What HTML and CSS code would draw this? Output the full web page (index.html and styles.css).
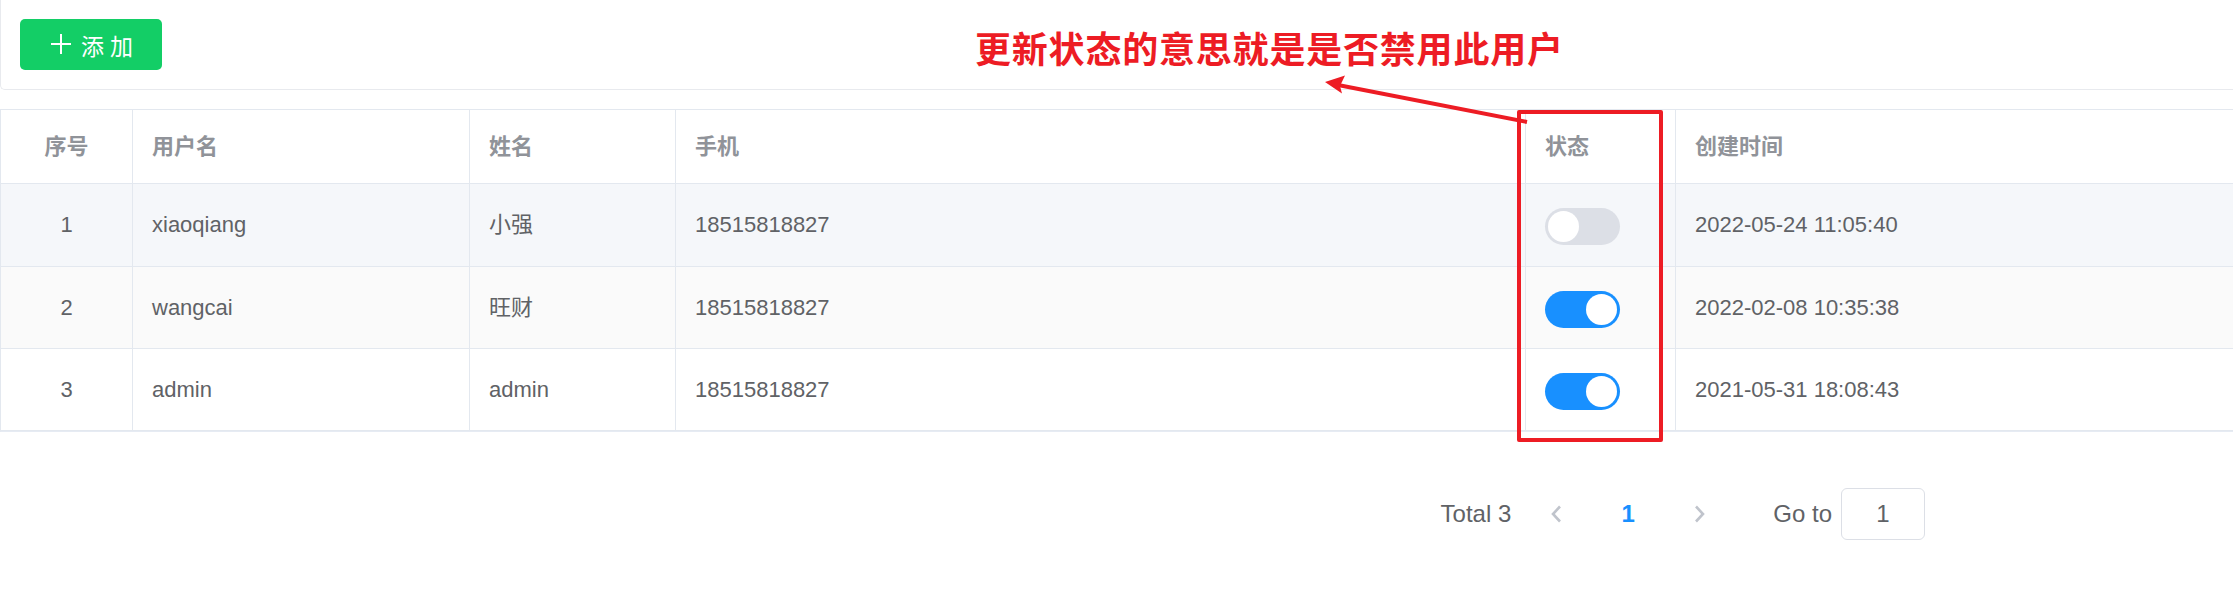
FILE: index.html
```html
<!DOCTYPE html>
<html lang="zh-CN">
<head>
<meta charset="utf-8">
<title>用户管理</title>
<link rel="stylesheet" href="styles.css">
</head>
<body>
<div class="page">
  <div class="toolbar">
    <button class="btn-add" type="button">
      <svg class="plus" width="20" height="20" viewBox="0 0 20 20"><path d="M10 0V20M0 10H20" stroke="#fff" stroke-width="2" fill="none"/></svg>
      <span class="btn-text">添加</span>
    </button>
  </div>

  <div class="table">
    <div class="row head">
      <div class="cell center">序号</div>
      <div class="cell">用户名</div>
      <div class="cell">姓名</div>
      <div class="cell">手机</div>
      <div class="cell">状态</div>
      <div class="cell last">创建时间</div>
    </div>
    <div class="row body r1">
      <div class="cell center">1</div>
      <div class="cell">xiaoqiang</div>
      <div class="cell">小强</div>
      <div class="cell">18515818827</div>
      <div class="cell"><span class="switch"><span class="knob"></span></span></div>
      <div class="cell last">2022-05-24 11:05:40</div>
    </div>
    <div class="row body r2">
      <div class="cell center">2</div>
      <div class="cell">wangcai</div>
      <div class="cell">旺财</div>
      <div class="cell">18515818827</div>
      <div class="cell"><span class="switch on"><span class="knob"></span></span></div>
      <div class="cell last">2022-02-08 10:35:38</div>
    </div>
    <div class="row body r3">
      <div class="cell center">3</div>
      <div class="cell">admin</div>
      <div class="cell">admin</div>
      <div class="cell">18515818827</div>
      <div class="cell"><span class="switch on"><span class="knob"></span></span></div>
      <div class="cell last">2021-05-31 18:08:43</div>
    </div>
  </div>

  <div class="pager">
    <span class="total">Total 3</span>
    <span class="pbtn"><svg width="12" height="18" viewBox="0 0 12 18"><path d="M10 1.5L3 9L10 16.5" stroke="#c0c4cc" stroke-width="2.6" fill="none"/></svg></span>
    <span class="pbtn active">1</span>
    <span class="pbtn"><svg width="12" height="18" viewBox="0 0 12 18"><path d="M2 1.5L9 9L2 16.5" stroke="#c0c4cc" stroke-width="2.6" fill="none"/></svg></span>
    <span class="jumper">Go to</span>
    <span class="goto-input">1</span>
  </div>

  <div class="note">更新状态的意思就是是否禁用此用户</div>
  <div class="mark-box"></div>
  <svg class="arrow" width="2233" height="608" viewBox="0 0 2233 608">
    <line x1="1527" y1="122" x2="1338" y2="85" stroke="#ed1c24" stroke-width="4"/>
    <polygon points="1325,82 1345,75.5 1340,86 1342,93.5" fill="#ed1c24"/>
  </svg>
</div>
</body>
</html>
```

FILE: styles.css
```css
html, body {
  margin: 0;
  padding: 0;
  background: #ffffff;
}

body {
  font-family: "Liberation Sans", Arial, "Noto Sans CJK SC", sans-serif;
  color: #606266;
  overflow: hidden;
}

.page {
  position: relative;
  width: 2233px;
  height: 608px;
}

/* toolbar card */
.toolbar {
  box-sizing: border-box;
  height: 90px;
  border: 1px solid #e8eaee;
  border-top: 0;
  border-right: 0;
  border-radius: 0 0 0 5px;
  padding: 19px 0 0 19px;
}

.btn-add {
  display: flex;
  align-items: center;
  justify-content: center;
  gap: 10px;
  width: 142px;
  height: 51px;
  padding: 0 0 0 2px;
  border: 0;
  border-radius: 5px;
  background: #13ce66;
  color: #ffffff;
  font-family: "Noto Sans CJK SC", sans-serif;
  font-size: 23px;
  line-height: 26px;
}

.plus {
  display: block;
  margin-top: -2px;
}

.btn-text {
  letter-spacing: 6px;
  margin-right: -6px;
}

/* table */
.table {
  margin-top: 19px;
  border-top: 1px solid #e3e8ef;
  border-left: 1px solid #e3e8ef;
  border-bottom: 1px solid #e6ebf3;
}

.row {
  display: grid;
  grid-template-columns: 132px 337px 206px 850px 150px 1fr;
}

.cell {
  box-sizing: border-box;
  display: flex;
  align-items: center;
  padding-left: 19px;
  border-right: 1px solid #e3e8ef;
  border-bottom: 1px solid #e3e8ef;
  font-size: 22px;
  line-height: 26px;
  color: #606266;
  white-space: nowrap;
}

.cell.center {
  justify-content: center;
  padding-left: 0;
}

.cell.last {
  border-right: 0;
}

.head .cell {
  height: 74px;
  font-weight: 700;
  color: #909399;
  background: #ffffff;
}

.r1 .cell {
  height: 83px;
  background: #f5f7fa;
}

.r2 .cell {
  height: 82px;
  background: #fafafa;
}

.r3 .cell {
  height: 82px;
  background: #ffffff;
}

/* switch */
.switch {
  position: relative;
  display: block;
  width: 75px;
  height: 37px;
  margin-top: 3px;
  border-radius: 19px;
  background: #dcdfe6;
}

.switch.on {
  background: #1890ff;
}

.knob {
  position: absolute;
  top: 3px;
  left: 3px;
  width: 31px;
  height: 31px;
  border-radius: 50%;
  background: #ffffff;
}

.switch.on .knob {
  left: auto;
  right: 3px;
}

/* pagination */
.pager {
  display: flex;
  align-items: center;
  justify-content: flex-end;
  height: 52px;
  margin-top: 56px;
  padding-right: 308px;
  font-size: 24px;
  line-height: 28px;
  color: #606266;
}

.total {
  margin-right: 9px;
}

.pbtn {
  display: flex;
  align-items: center;
  justify-content: center;
  width: 72px;
  height: 52px;
}

.pbtn.active {
  color: #1890ff;
  font-weight: 700;
}

.jumper {
  margin-left: 37px;
  margin-right: 9px;
}

.goto-input {
  box-sizing: border-box;
  display: flex;
  align-items: center;
  justify-content: center;
  width: 84px;
  height: 52px;
  border: 1px solid #dcdfe6;
  border-radius: 6px;
}

/* annotation overlay */
.note {
  position: absolute;
  top: 23px;
  left: 975px;
  font-family: "Noto Sans CJK SC", sans-serif;
  font-size: 36px;
  line-height: 48px;
  font-weight: 700;
  color: #ed1c24;
  letter-spacing: 0.8px;
  white-space: nowrap;
}

.mark-box {
  position: absolute;
  left: 1517px;
  top: 110px;
  box-sizing: border-box;
  width: 146px;
  height: 332px;
  border: 4px solid #ed1c24;
  border-radius: 2px;
}

.arrow {
  position: absolute;
  left: 0;
  top: 0;
  pointer-events: none;
}
```
